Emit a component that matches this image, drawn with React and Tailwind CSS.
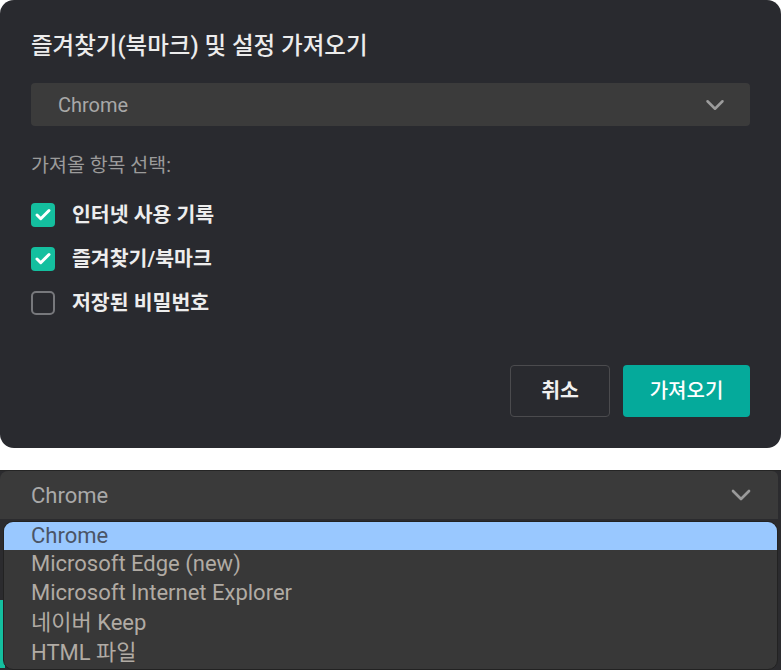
import React from "react";
import { Check, ChevronDown } from "lucide-react";

const fontStack = "font-['Roboto','Noto_Sans_CJK_KR',sans-serif]";

const items = [
  { label: "인터넷 사용 기록", checked: true },
  { label: "즐겨찾기/북마크", checked: true },
  { label: "저장된 비밀번호", checked: false },
];

const browsers = [
  "Chrome",
  "Microsoft Edge (new)",
  "Microsoft Internet Explorer",
  "네이버 Keep",
  "HTML 파일",
];

function CheckBox({ checked }) {
  if (checked) {
    return (
      <span className="flex h-[24px] w-[24px] shrink-0 items-center justify-center rounded-[4px] bg-[#14bf9f]">
        <Check size={18} strokeWidth={4} className="text-white" />
      </span>
    );
  }
  return (
    <span className="h-[24px] w-[24px] shrink-0 rounded-[5px] border-2 border-[#77787c]" />
  );
}

export default function App() {
  return (
    <div className={`flex h-[670px] w-[781px] flex-col bg-white ${fontStack}`}>
      {/* import dialog */}
      <div className="flex h-[448px] flex-col rounded-[14px] bg-[#292a2f] px-[31px] pt-[30px] pb-[31px]">
        <h2 className="text-[23.5px] leading-[32px] font-medium text-[#ececec]">
          즐겨찾기(북마크) 및 설정 가져오기
        </h2>

        <div className="mt-[21px] flex h-[43px] items-center justify-between rounded-[4px] bg-[#3b3b3b] pl-[27px] pr-[20px]">
          <span className="text-[20px] text-[#a8a8a8]">Chrome</span>
          <ChevronDown size={30} strokeWidth={2} className="text-[#9c9c9c]" />
        </div>

        <p className="mt-[26px] text-[19.5px] leading-[28px] text-[#9b9b9b]">
          가져올 항목 선택:
        </p>

        <div className="mt-[23px] flex flex-col gap-[20px]">
          {items.map((item) => (
            <label key={item.label} className="flex h-[24px] items-center gap-[17px]">
              <CheckBox checked={item.checked} />
              <span className="text-[20.5px] font-semibold text-[#ededed]">
                {item.label}
              </span>
            </label>
          ))}
        </div>

        <div className="mt-auto flex justify-end gap-[13px]">
          <button className="h-[52px] w-[100px] rounded-[4px] border-[1.5px] border-[#4b4b4e] text-[20.5px] font-semibold text-[#f0f0f0]">
            취소
          </button>
          <button className="h-[52px] w-[127px] rounded-[4px] bg-[#05aa9b] text-[20px] font-medium text-white">
            가져오기
          </button>
        </div>
      </div>

      {/* opened select */}
      <div className="relative mt-[22px] h-[200px] overflow-hidden border-t border-[#252525] bg-[#2b2b2e]">
        <div className="mr-[3px] flex h-[48px] items-center justify-between rounded-tl-[8px] rounded-tr-[6px] bg-[#3a3a3a] pl-[31px] pr-[21px]">
          <span className="text-[22px] text-[#a9a9a9]">Chrome</span>
          <ChevronDown size={32} strokeWidth={2} className="text-[#9a9a9a]" />
        </div>
        <div className="mt-[81px] h-[68px] w-[5px] bg-[#14bf9f]" />

        <ul className="absolute top-[50px] left-[3px] right-[3px] h-[149px] overflow-hidden rounded-[10px] border border-[#222] bg-[#383838] text-[22px] leading-[29px]">
          {browsers.map((name, i) => (
            <li
              key={name}
              className={
                i === 0
                  ? "h-[28px] bg-[#99c8ff] pl-[27px] leading-[27px] text-[#4b5566]"
                  : i === 3
                  ? "h-[31px] pl-[27px] leading-[30px] text-[#b1aba4]"
                  : "h-[29px] pl-[27px] leading-[27px] text-[#b1aba4]"
              }
            >
              {name}
            </li>
          ))}
        </ul>
      </div>
    </div>
  );
}
